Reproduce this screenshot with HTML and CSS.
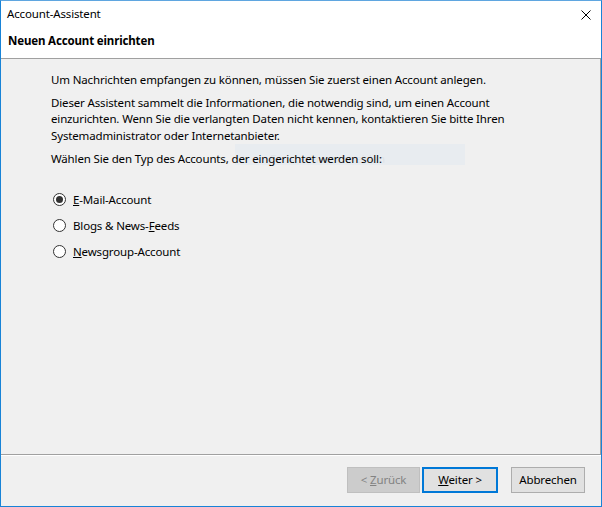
FILE: index.html
```html
<!DOCTYPE html>
<html lang="de">
<head>
    <meta charset="UTF-8">
    <title>Account-Assistent</title>
    <link rel="stylesheet" href="styles.css">
</head>
<body>
    <div class="window">
        <div class="titlebar">
            <span class="title">Account-Assistent</span>
            <svg class="close" width="10" height="10" viewBox="0 0 10 10">
                <path d="M0.5 0.5 L9.5 9.5 M9.5 0.5 L0.5 9.5" stroke="#000" stroke-width="1"/>
            </svg>
        </div>
        <div class="header">Neuen Account einrichten</div>

        <div class="content">
            <p class="first">Um Nachrichten empfangen zu können, müssen Sie zuerst einen Account anlegen.</p>
            <p class="second">Dieser Assistent sammelt die Informationen, die notwendig sind, um einen Account einzurichten. Wenn Sie die verlangten Daten nicht kennen, kontaktieren Sie bitte Ihren Systemadministrator oder Internetanbieter.</p>
            <p class="choose">Wählen Sie den Typ des Accounts, der eingerichtet werden soll:
                <span class="ghost">Fenster ausschneiden</span>
            </p>

            <div class="options">
                <label class="option"><span class="radio checked"></span><span><u>E</u>-Mail-Account</span></label>
                <label class="option"><span class="radio"></span><span>Blogs &amp; News-<u>F</u>eeds</span></label>
                <label class="option"><span class="radio"></span><span><u>N</u>ewsgroup-Account</span></label>
            </div>
        </div>

        <div class="footer">
            <button class="btn disabled">&lt; <u>Z</u>urück</button>
            <button class="btn default"><u>W</u>eiter &gt;</button>
            <button class="btn cancel">Abbrechen</button>
        </div>
    </div>
</body>
</html>
```

FILE: styles.css
```css
html, body {
    margin: 0;
    padding: 0;
}
body {
    font-family: "Noto Sans", "Open Sans", sans-serif;
    font-size: 11.5px;
    letter-spacing: -0.15px;
    color: #000;
    background: #fff;
}
.window {
    width: 602px;
    height: 507px;
    box-sizing: border-box;
    border: 1px solid #1883d7;
    border-top-color: #5fa6e0;
    display: flex;
    flex-direction: column;
    background: #f0f0f0;
}
.titlebar {
    height: 26px;
    background: #fff;
    display: flex;
    align-items: center;
    justify-content: space-between;
    padding: 0 10px 0 6px;
}
.title {
    line-height: 16px;
}
.close {
    display: block;
    margin-top: 1px;
}
.header {
    height: 32px;
    background: #fff;
    border-bottom: 1px solid #a0a0a0;
    box-sizing: border-box;
    padding-left: 7px;
    font-weight: bold;
    line-height: 16px;
    padding-top: 6px;
}
.content {
    flex: 1;
    padding: 13px 40px 0 50px;
    border-right: 1px solid #a0a0a0;
    position: relative;
    z-index: 0;
}
.content p {
    margin: 7px 0 0 0;
    line-height: 16.5px;
}
.content p.first {
    margin-top: 0;
}
.content p.second {
    margin-top: 6px;
}
.choose {
    position: relative;
}
.ghost {
    position: absolute;
    left: 184px;
    top: -7px;
    width: 230px;
    height: 21px;
    background: #e8ecf0;
    color: #dfe3e7;
    padding: 7px 0 0 35px;
    box-sizing: border-box;
    line-height: 16px;
    z-index: -1;
}
.options {
    margin-top: 24px;
    display: flex;
    flex-direction: column;
    gap: 10px;
}
.option {
    display: flex;
    align-items: center;
    height: 16px;
    line-height: 16px;
}
.radio {
    width: 13px;
    height: 13px;
    box-sizing: border-box;
    border: 1px solid #333;
    border-radius: 50%;
    background: #fff;
    margin: 0 7px 0 2px;
    position: relative;
}
.radio.checked::after {
    content: "";
    position: absolute;
    left: 2px;
    top: 2px;
    width: 7px;
    height: 7px;
    border-radius: 50%;
    background: #333;
}
.footer {
    height: 52px;
    box-sizing: border-box;
    border-top: 1px solid #a0a0a0;
    box-shadow: inset 0 1px 0 #fff;
    display: flex;
    align-items: flex-start;
    padding: 12px 0 0 346px;
}
.btn {
    font-family: inherit;
    font-size: 11.5px;
    letter-spacing: -0.15px;
    height: 26px;
    box-sizing: border-box;
    background: #e1e1e1;
    border: 1px solid #adadad;
    color: #000;
    padding: 0 0 2px 0;
    margin: 0;
}
.btn.disabled {
    width: 73px;
    background: #cccccc;
    border-color: #bfbfbf;
    color: #838383;
}
.btn.default {
    width: 76px;
    margin-left: 2px;
    border: 2px solid #0078d7;
}
.btn.cancel {
    width: 74px;
    margin-left: 13px;
}
```
